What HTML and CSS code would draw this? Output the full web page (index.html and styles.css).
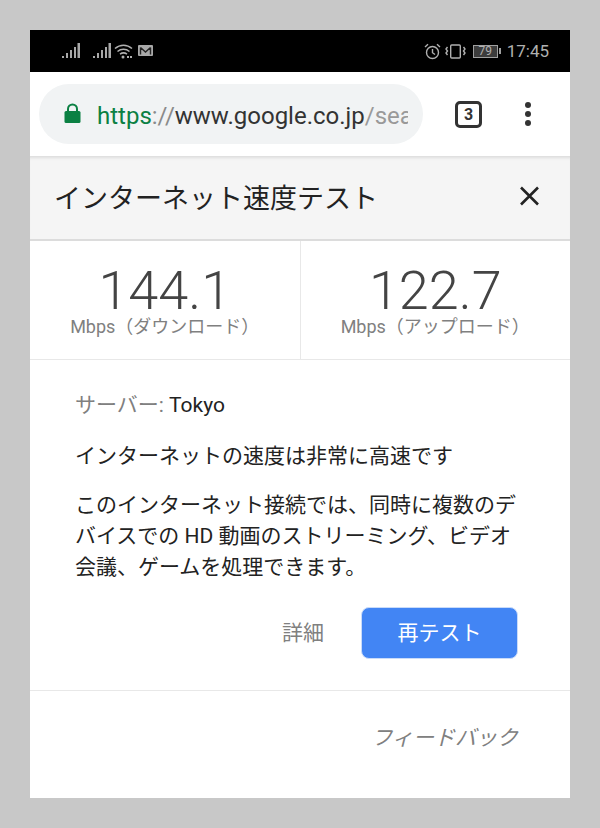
FILE: index.html
```html
<!DOCTYPE html>
<html lang="ja">
<head>
  <meta charset="UTF-8">
  <meta name="viewport" content="width=device-width, initial-scale=1.0">
  <title>インターネット速度テスト</title>
  <link rel="stylesheet" href="styles.css">
</head>
<body>

  <div class="phone">

    <div class="statusbar">
      <div class="status-left">
        <svg class="sig" width="18" height="16" viewBox="0 0 18 16"><g fill="#a8a8a8"><rect x="0" y="13" width="2" height="2"/><rect x="4" y="10" width="2" height="5"/><rect x="8" y="7" width="2" height="8"/><rect x="12" y="4" width="2" height="11"/><rect x="15.500" y="0" width="2.500" height="15"/></g></svg>
        <svg class="sig sig2" width="18" height="16" viewBox="0 0 18 16"><g fill="#a8a8a8"><rect x="0" y="13" width="2" height="2"/><rect x="4" y="10" width="2" height="5"/><rect x="8" y="7" width="2" height="8"/><rect x="12" y="4" width="2" height="11"/><rect x="15.500" y="0" width="2.500" height="15"/></g></svg>
        <svg class="wifi" width="19" height="16" viewBox="0 0 19 16"><g fill="none" stroke="#b0b0b0" stroke-width="1.5"><path d="M1 5.5C6 1 13 1 18 5.5"/><path d="M3.5 8.500C7 5.500 12 5.500 15.500 8.500"/><path d="M6 11.200C8 9.700 11 9.700 13 11.200"/></g><circle cx="9" cy="14" r="1.500" fill="#b0b0b0"/><rect x="13" y="13" width="2" height="2" fill="#b0b0b0"/><rect x="16" y="13" width="2" height="2" fill="#b0b0b0"/></svg>
        <svg class="mail" width="15" height="12" viewBox="0 0 15 12"><rect x="0" y="0" width="15" height="11" rx="1" fill="#a8a8a8"/><path d="M2.500 2.500V9.500M12.500 2.500V9.500M2.500 2.500L7.500 7L12.500 2.500" fill="none" stroke="#222" stroke-width="1.400"/></svg>
      </div>
      <div class="status-right">
        <svg width="17" height="17" viewBox="0 0 17 17"><g fill="none" stroke="#b0b0b0" stroke-width="1.400"><circle cx="8.500" cy="9.500" r="6"/><path d="M8.500 6V9.700L11 11.500"/><path d="M1 4L4 1.200M16 4L13 1.200"/></g></svg>
        <svg class="vibrate" width="21" height="15" viewBox="0 0 21 15"><g fill="none" stroke="#b0b0b0" stroke-width="1.400"><rect x="5.700" y="1" width="9.600" height="13" rx="1"/><path d="M2.500 3L1 5L2.500 7L1 9L2.500 11M18.500 3L20 5L18.500 7L20 9L18.500 11"/></g></svg>
        <div class="battery"><span class="battery-body">79</span><span class="battery-tip"></span></div>
        <span class="clock">17:45</span>
      </div>
    </div>

    <div class="toolbar">
      <div class="omnibox">
        <svg class="lock" width="17" height="21" viewBox="0 0 17 21"><path d="M4 9V6a4.500 4.500 0 0 1 9 0V9" fill="none" stroke="#0b8043" stroke-width="2"/><rect x="0.500" y="8" width="16" height="12" rx="1.500" fill="#0b8043"/></svg>
        <div class="url"><span class="url-https">https</span><span class="url-sep">://</span><span class="url-host">www.google.co.jp</span><span class="url-path">/sea</span></div>
      </div>
      <div class="tab-count">3</div>
      <div class="menu-dots"><span></span><span></span><span></span></div>
    </div>

    <div class="card-head">
      <h1>インターネット速度テスト</h1>
      <svg class="close" width="21" height="20" viewBox="0 0 21 20"><path d="M2 1.500L19 18.500M19 1.500L2 18.500" stroke="#222" stroke-width="2.600" fill="none"/></svg>
    </div>

    <div class="speeds">
      <div class="speed">
        <div class="speed-num">144.1</div>
        <div class="speed-label">Mbps（ダウンロード）</div>
      </div>
      <div class="speed">
        <div class="speed-num">122.7</div>
        <div class="speed-label">Mbps（アップロード）</div>
      </div>
    </div>

    <div class="info">
      <p class="server"><span class="server-key">サーバー:</span> Tokyo</p>
      <p class="verdict">インターネットの速度は非常に高速です</p>
      <p class="detail">このインターネット接続では、同時に複数のデバイスでの HD 動画のストリーミング、ビデオ会議、ゲームを処理できます。</p>
      <div class="actions">
        <span class="more">詳細</span>
        <button class="retest">再テスト</button>
      </div>
    </div>

    <div class="feedback">フィードバック</div>

  </div>

</body>
</html>
```

FILE: styles.css
```css
body {
  margin: 0;
  background: #c8c8c8;
  font-family: Roboto, "Noto Sans CJK JP", sans-serif;
}
.phone {
  width: 540px;
  height: 768px;
  margin: 30px;
  background: white;
  overflow: hidden;
}

.statusbar {
  height: 42px;
  background: black;
  color: #b0b0b0;
  display: flex;
  justify-content: space-between;
  align-items: center;
  padding: 0 21px 0 32px;
}
.status-left, .status-right {
  display: flex;
  align-items: center;
}
.sig2 { margin-left: 13px; }
.wifi { margin-left: 3px; }
.mail { margin-left: 5px; }
.vibrate { margin-left: 4px; }
.battery {
  display: flex;
  align-items: center;
  margin-left: 7px;
}
.battery-body {
  width: 23px;
  height: 11px;
  border: 1px solid #a0a0a0;
  background: #3c3c3c;
  font-size: 12px;
  line-height: 11px;
  text-align: center;
}
.battery-tip {
  width: 2px;
  height: 6px;
  margin-left: 1px;
  background: #a0a0a0;
}
.clock {
  margin-left: 6px;
  font-size: 17px;
}

.toolbar {
  height: 84px;
  display: flex;
  align-items: center;
  padding: 0 0 0 9px;
  box-sizing: border-box;
  background: white;
}
.omnibox {
  width: 384px;
  height: 60px;
  box-sizing: border-box;
  padding: 0 15px 0 25px;
  border-radius: 30px;
  background: #f1f3f4;
  display: flex;
  align-items: center;
  margin-top: -1px;
}
.lock { flex: none; margin-right: 16px; }
.url {
  padding-top: 4px;
  font-size: 24px;
  white-space: nowrap;
  overflow: hidden;
}
.url-https { color: #0b8043; }
.url-sep { color: #8a8a8a; }
.url-host { color: #333; }
.url-path { color: #999; }
.tab-count {
  width: 27px;
  height: 27px;
  box-sizing: border-box;
  margin-left: 32px;
  border: 3px solid #333;
  border-radius: 5px;
  font-size: 16px;
  font-weight: 700;
  line-height: 21px;
  text-align: center;
  color: #333;
}
.menu-dots {
  margin-left: 43px;
  display: flex;
  flex-direction: column;
  gap: 3px;
}
.menu-dots span {
  width: 6px;
  height: 6px;
  border-radius: 50%;
  background: #333;
}

.card-head {
  height: 85px;
  box-sizing: border-box;
  padding: 0 30px 3px 24px;
  display: flex;
  justify-content: space-between;
  align-items: center;
  background: #f5f5f5;
  border-bottom: 2px solid #dcdcdc;
  box-shadow: inset 0 4px 3px -2px #ddd;
}
.card-head h1 {
  margin: 0;
  font-size: 27px;
  font-weight: 400;
  color: #222;
}

.speeds {
  display: flex;
  height: 118px;
  border-bottom: 1px solid #e8e8e8;
}
.speed {
  flex: 1;
  text-align: center;
  padding-top: 24px;
  box-sizing: border-box;
}
.speed + .speed { border-left: 1px solid #e8e8e8; }
.speed-num {
  font-size: 54px;
  font-weight: 300;
  line-height: 52px;
  color: #444;
}
.speed-label {
  font-size: 18px;
  line-height: 20px;
  color: #808080;
}

.info {
  padding: 30px 52px 31px 45px;
  border-bottom: 1px solid #e8e8e8;
  font-size: 21px;
  color: #222;
}
.info p { margin: 0; }
.server { line-height: 30px; }
.server-key { color: #808080; }
.info .verdict {
  line-height: 30px;
  margin-top: 21px;
}
.info .detail {
  line-height: 31px;
  margin-top: 19px;
}
.actions {
  display: flex;
  justify-content: flex-end;
  align-items: center;
  margin-top: 24px;
}
.more {
  padding-bottom: 4px;
  font-size: 21px;
  color: #808080;
  margin-right: 37px;
}
.retest {
  width: 157px;
  height: 52px;
  padding: 0 0 4px;
  border: 1px solid #c9dbf9;
  border-radius: 8px;
  background: #4285f4;
  color: white;
  font-family: inherit;
  font-size: 21px;
}

.feedback {
  padding: 32px 52px 0 0;
  text-align: right;
  font-size: 21px;
  line-height: 30px;
  font-style: italic;
  color: #808080;
}
```
